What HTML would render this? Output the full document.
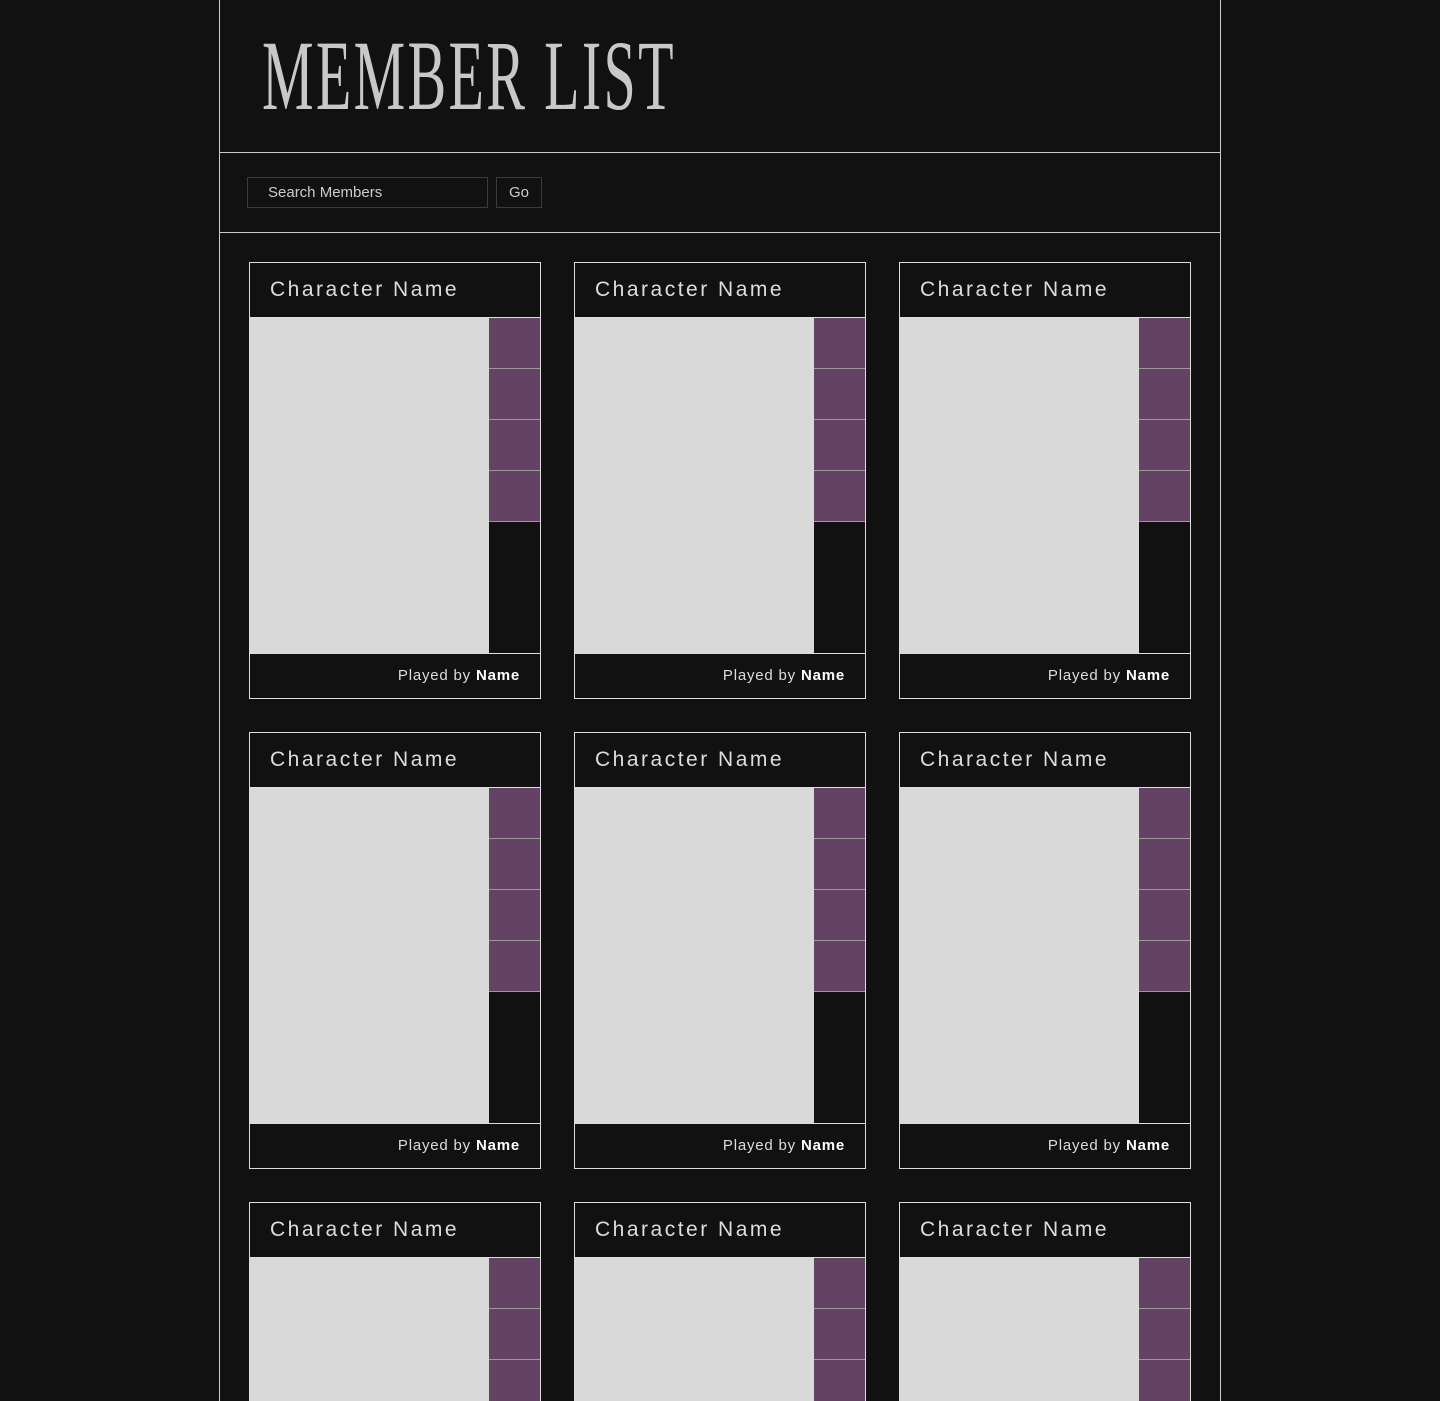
<!DOCTYPE html>
<html style="height:1401px;overflow:hidden"><head><style>
body{margin:0;background:#111;font-family:"Liberation Sans",sans-serif;color:#ddd;height:1401px;overflow:hidden}
#root{position:relative;width:1440px;height:1401px;overflow:hidden}
.wrap{position:absolute;left:219px;top:0;width:1000px;height:1401px;border-left:1px solid #ccc;border-right:1px solid #ccc}
.hdr{height:152px;border-bottom:1px solid #ccc;position:relative}
.title{position:absolute;left:42px;top:26px;font-family:"Liberation Serif",serif;font-size:100px;line-height:100px;color:#c8c8c8;transform:scaleX(0.58);transform-origin:left top;letter-spacing:4px;white-space:nowrap}
.srch{height:79px;border-bottom:1px solid #ccc;position:relative}
.inp{position:absolute;left:27px;top:24px;width:241px;height:31px;border:1px solid #3a3a3a;font-size:15px;line-height:29px;padding-left:20px;box-sizing:border-box;color:#ccc}
.go{position:absolute;left:276px;top:24px;width:46px;height:31px;border:1px solid #3a3a3a;box-sizing:border-box;font-size:15px;line-height:29px;text-align:center;color:#ccc}
.card{position:absolute;width:292px;height:437px;border:1px solid #ddd;box-sizing:border-box}
.ch{height:54px;border-bottom:1px solid #ddd;font-size:21px;letter-spacing:2.5px;line-height:54px;padding-left:20px;color:#ddd}
.img{position:absolute;left:0;top:55px;width:239px;height:335px;background:#d9d9d9}
.sq{position:absolute;left:239px;width:51px;height:50px;background:#634263;border-bottom:1px solid #999}
.side{position:absolute;left:239px;top:55px;width:51px;height:335px;background:#111}
.ft{position:absolute;left:0;top:390px;width:290px;height:45px;border-top:1px solid #ddd;box-sizing:border-box;text-align:right;padding-right:20px;font-size:15px;line-height:44px;letter-spacing:.8px;color:#ddd}
.ft b{color:#fff}
</style></head><body>
<div id="root">
<div class="wrap">
<div class="hdr"><div class="title">MEMBER LIST</div></div>
<div class="srch"><div class="inp">Search Members</div><div class="go">Go</div></div>
</div>
<div id="c"></div>
</div>
<script>
var h='';var xs=[249,574,899],ys=[262,732,1202];
ys.forEach(function(y){xs.forEach(function(x){
h+='<div class="card" style="left:'+x+'px;top:'+y+'px"><div class="ch">Character Name</div><div class="side"></div><div class="img"></div>';
for(var i=0;i<4;i++)h+='<div class="sq" style="top:'+(55+i*51)+'px"></div>';
h+='<div class="ft">Played by <b>Name</b></div></div>';});});
document.getElementById('c').innerHTML=h;
</script>
</body></html>
